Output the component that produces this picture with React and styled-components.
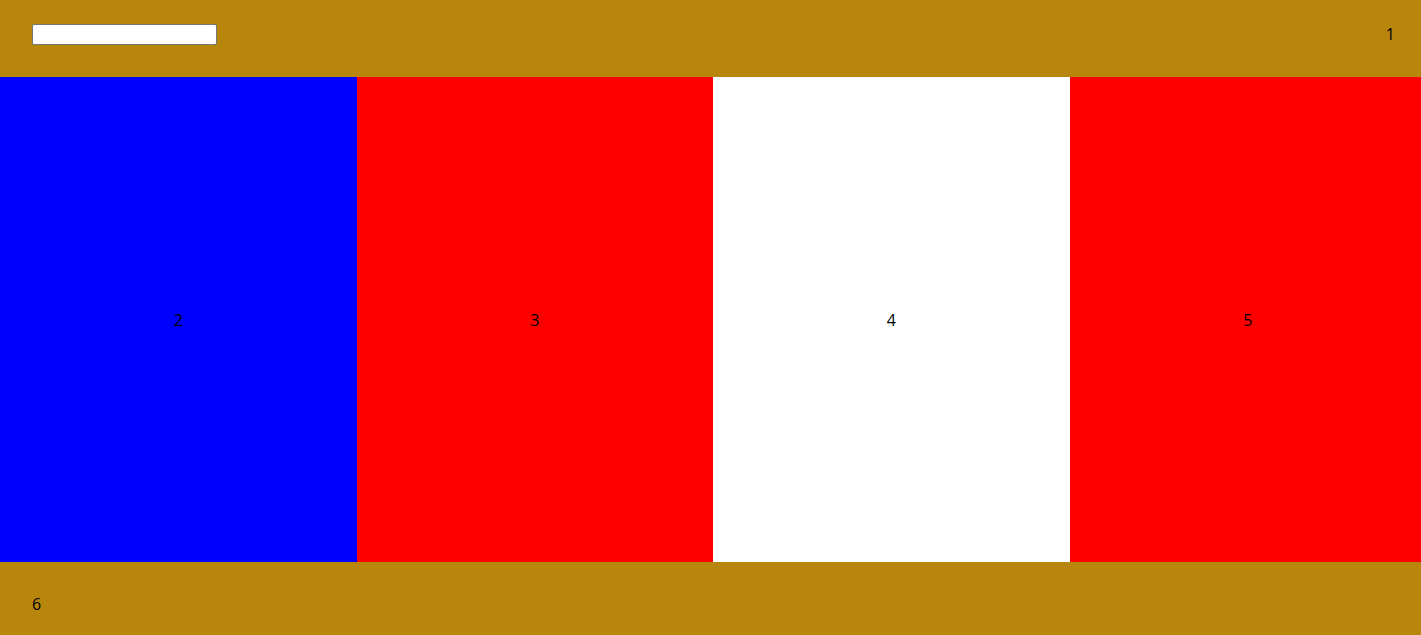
import React from "react";
import styled, { createGlobalStyle } from "styled-components";

const GlobalStyle = createGlobalStyle`
  html, body {
    margin: 0;
    padding: 0;
    overflow: hidden;
    background: #ffffff;
  }
  body {
    font-family: "Open Sans", "Noto Sans", sans-serif;
    font-size: 16px;
    color: #000000;
  }
`;

const Page = styled.div`
  width: 1426px;
  height: 635px;
  display: grid;
  grid-template-rows: 77px 485px 73px;
`;

const Header = styled.header`
  background: #b8860b;
  display: flex;
  align-items: flex-start;
  justify-content: space-between;
  padding: 23px 31px 0 32px;
  box-sizing: border-box;
`;

const SearchInput = styled.input`
  width: 185px;
  height: 21px;
  margin-top: 1px;
  box-sizing: border-box;
  border: 1px solid #767676;
  border-radius: 2px;
  padding: 1px 2px;
  background: #ffffff;
  font-family: inherit;
  font-size: 13px;
  outline: none;
`;

const Label = styled.span`
  line-height: 22px;
`;

const Columns = styled.main`
  display: grid;
  grid-template-columns: repeat(4, 1fr);
`;

const Column = styled.section`
  background: ${(p) => p.$bg};
  display: flex;
  align-items: center;
  justify-content: center;
`;

const Footer = styled.footer`
  background: #b8860b;
  display: flex;
  align-items: flex-start;
  padding: 31px 32px 0;
  box-sizing: border-box;
`;

const columns = [
  { id: 2, bg: "#0000ff" },
  { id: 3, bg: "#ff0000" },
  { id: 4, bg: "#ffffff" },
  { id: 5, bg: "#ff0000" },
];

export default function App() {
  return (
    <>
      <GlobalStyle />
      <Page>
        <Header>
          <SearchInput type="text" />
          <Label>1</Label>
        </Header>
        <Columns>
          {columns.map((c) => (
            <Column key={c.id} $bg={c.bg}>
              <Label>{c.id}</Label>
            </Column>
          ))}
        </Columns>
        <Footer>
          <Label>6</Label>
        </Footer>
      </Page>
    </>
  );
}
